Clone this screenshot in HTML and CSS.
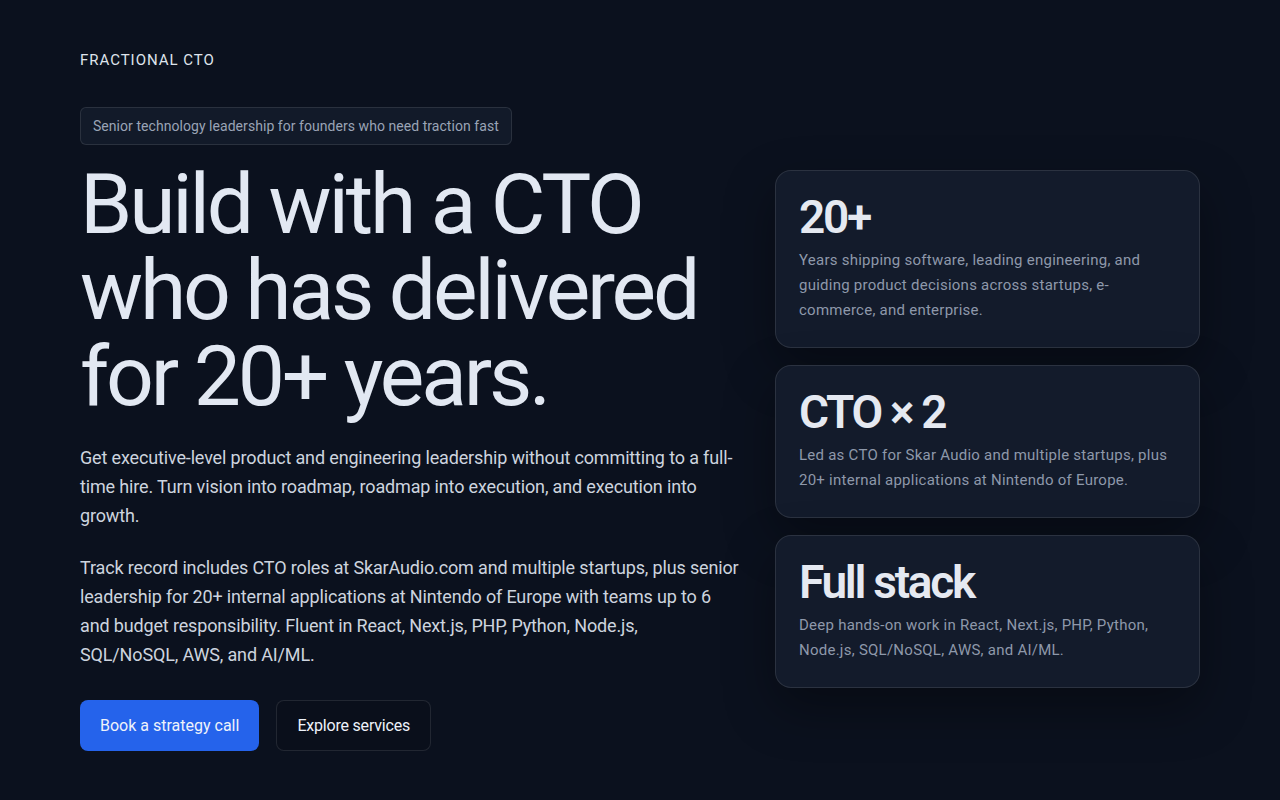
FILE: index.html
```html
<!DOCTYPE html>
<html lang="en">
<head>
<meta charset="utf-8">
<title>Fractional CTO</title>
<link rel="stylesheet" href="styles.css">
</head>
<body>
<div class="page">
  <header class="brand">FRACTIONAL CTO</header>
  <main class="hero">
    <section class="intro">
      <div class="badge">Senior technology leadership for founders who need traction fast</div>
      <h1 class="headline">Build with a CTO who has delivered for 20+ years.</h1>
      <p class="lead">Get executive-level product and engineering leadership without committing to a full-time hire. Turn vision into roadmap, roadmap into execution, and execution into growth.</p>
      <p class="lead">Track record includes CTO roles at SkarAudio.com and multiple startups, plus senior leadership for 20+ internal applications at Nintendo of Europe with teams up to 6 and budget responsibility. Fluent in React, Next.js, PHP, Python, Node.js, SQL/NoSQL, AWS, and AI/ML.</p>
      <div class="actions">
        <a class="btn btn-primary" href="#">Book a strategy call</a>
        <a class="btn btn-ghost" href="#">Explore services</a>
      </div>
    </section>
    <aside class="stats">
      <div class="card">
        <div class="card-title">20+</div>
        <p class="card-text">Years shipping software, leading engineering, and guiding product decisions across startups, e-commerce, and enterprise.</p>
      </div>
      <div class="card">
        <div class="card-title">CTO × 2</div>
        <p class="card-text">Led as CTO for Skar Audio and multiple startups, plus 20+ internal applications at Nintendo of Europe.</p>
      </div>
      <div class="card">
        <div class="card-title">Full stack</div>
        <p class="card-text">Deep hands-on work in React, Next.js, PHP, Python, Node.js, SQL/NoSQL, AWS, and AI/ML.</p>
      </div>
    </aside>
  </main>
</div>
</body>
</html>
```

FILE: styles.css
```css
* { box-sizing: border-box; }
html, body { margin: 0; padding: 0; }
body {
  background: #0b111e;
  color: #e2e8f0;
  font-family: Roboto, "Liberation Sans", sans-serif;
  height: 800px;
  overflow: hidden;
}
.page {
  padding: 50px 80px 0 80px;
}
.brand {
  font-size: 15px;
  line-height: 20px;
  letter-spacing: 0.065em;
  color: #dfe4ec;
}
.hero {
  display: grid;
  grid-template-columns: 660px 425px;
  column-gap: 35px;
  align-items: center;
  margin-top: 37px;
}
.intro { display: flex; flex-direction: column; align-items: flex-start; }
.badge {
  font-size: 14px;
  line-height: 20px;
  letter-spacing: 0.05px;
  color: #9aa4b6;
  background: #121a29;
  border: 1px solid rgba(255,255,255,0.1);
  border-radius: 6px;
  padding: 8px 12px;
}
.headline {
  font-weight: 400;
  font-size: 84px;
  line-height: 86px;
  letter-spacing: -0.038em;
  color: #e2e8f2;
  margin: 17px 0 0 0;
}
.lead {
  font-size: 18px;
  line-height: 29px;
  letter-spacing: -0.15px;
  color: #cdd4df;
  margin: 23px 0 0 0;
}
.actions { display: flex; gap: 17px; margin-top: 31px; }
.btn {
  display: inline-flex;
  align-items: center;
  height: 51px;
  padding: 0 20px;
  border-radius: 8px;
  font-size: 16px;
  text-decoration: none;
  color: #eef2fa;
}
.btn-primary { background: #2563eb; }
.btn-ghost { border: 1px solid rgba(255,255,255,0.1); background: #0a0f1b; letter-spacing: -0.2px; }
.stats { display: flex; flex-direction: column; gap: 17.5px; }
.card {
  background: #131b2b;
  border: 1px solid rgba(255,255,255,0.1);
  border-radius: 16px;
  padding: 22px 23px 24px 23px;
  box-shadow: 0 20px 50px rgba(0,0,0,0.35);
}
.card-title {
  font-weight: 600;
  font-size: 46px;
  line-height: 48px;
  letter-spacing: -0.05em;
  color: #e5e9f1;
}
.card-text {
  font-size: 15px;
  line-height: 25px;
  letter-spacing: 0.25px;
  color: #8e98aa;
  margin: 6.5px 0 0 0;
}
```
